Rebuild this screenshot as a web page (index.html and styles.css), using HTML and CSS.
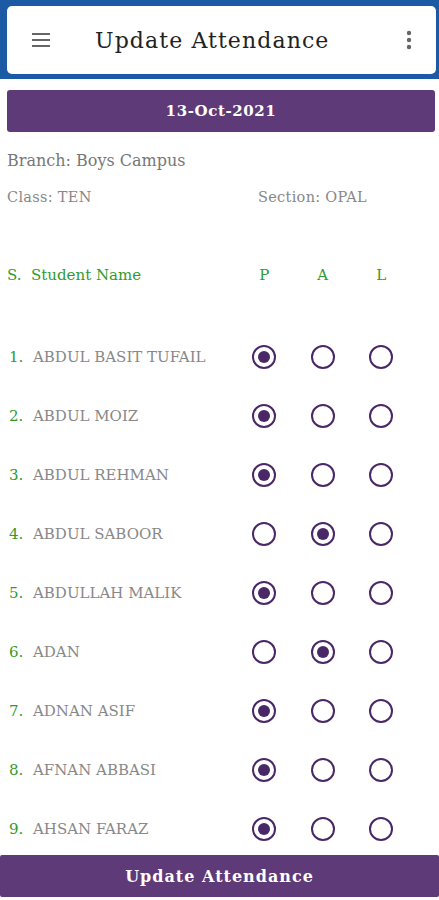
FILE: index.html
```html
<!DOCTYPE html>
<html>
<head>
<meta charset="utf-8">
<link rel="stylesheet" href="styles.css">
</head>
<body>
<div class="topband">
  <div class="toolbar">
    <svg class="menu" width="24" height="24" viewBox="0 0 24 24"><path d="M3 6h18M3 12h18M3 18h18" stroke="#666" stroke-width="2"/></svg>
    <div class="title">Update Attendance</div>
    <svg class="more" width="6" height="20" viewBox="0 0 6 20"><circle cx="3" cy="3" r="2.2" fill="#666"/><circle cx="3" cy="10" r="2.2" fill="#666"/><circle cx="3" cy="17" r="2.2" fill="#666"/></svg>
  </div>
</div>
<div class="datebar">13-Oct-2021</div>
<div class="branch">Branch: Boys Campus</div>
<div class="classrow"><span class="cls">Class: TEN</span><span class="sec">Section: OPAL</span></div>
<div class="header row">
  <div class="name">S.&nbsp; Student Name</div>
  <div class="col">P</div><div class="col">A</div><div class="col">L</div>
</div>
<div class="list">
  <div class="row"><div class="name"><span class="num">1.</span>ABDUL BASIT TUFAIL</div><div class="col"><span class="radio on"></span></div><div class="col"><span class="radio"></span></div><div class="col"><span class="radio"></span></div></div>
  <div class="row"><div class="name"><span class="num">2.</span>ABDUL MOIZ</div><div class="col"><span class="radio on"></span></div><div class="col"><span class="radio"></span></div><div class="col"><span class="radio"></span></div></div>
  <div class="row"><div class="name"><span class="num">3.</span>ABDUL REHMAN</div><div class="col"><span class="radio on"></span></div><div class="col"><span class="radio"></span></div><div class="col"><span class="radio"></span></div></div>
  <div class="row"><div class="name"><span class="num">4.</span>ABDUL SABOOR</div><div class="col"><span class="radio"></span></div><div class="col"><span class="radio on"></span></div><div class="col"><span class="radio"></span></div></div>
  <div class="row"><div class="name"><span class="num">5.</span>ABDULLAH MALIK</div><div class="col"><span class="radio on"></span></div><div class="col"><span class="radio"></span></div><div class="col"><span class="radio"></span></div></div>
  <div class="row"><div class="name"><span class="num">6.</span>ADAN</div><div class="col"><span class="radio"></span></div><div class="col"><span class="radio on"></span></div><div class="col"><span class="radio"></span></div></div>
  <div class="row"><div class="name"><span class="num">7.</span>ADNAN ASIF</div><div class="col"><span class="radio on"></span></div><div class="col"><span class="radio"></span></div><div class="col"><span class="radio"></span></div></div>
  <div class="row"><div class="name"><span class="num">8.</span>AFNAN ABBASI</div><div class="col"><span class="radio on"></span></div><div class="col"><span class="radio"></span></div><div class="col"><span class="radio"></span></div></div>
  <div class="row"><div class="name"><span class="num">9.</span>AHSAN FARAZ</div><div class="col"><span class="radio on"></span></div><div class="col"><span class="radio"></span></div><div class="col"><span class="radio"></span></div></div>
</div>
<div class="bottombtn">Update Attendance</div>
</body>
</html>
```
FILE: styles.css
```css
* { box-sizing: border-box; }
html, body { margin: 0; padding: 0; background: #fff; }
body {
  width: 439px;
  height: 900px;
  overflow: hidden;
  font-family: "DejaVu Serif", serif;
  color: #777;
  position: relative;
}
.topband {
  background: #1c5aa6;
  padding: 6px 3px 5px 7px;
  height: 79px;
}
.toolbar {
  background: #fff;
  border-radius: 5px;
  height: 68px;
  display: flex;
  align-items: center;
  padding: 0 24px 0 22px;
}
.menu { flex: none; }
.title {
  flex: 1;
  margin-left: 42px;
  font-size: 22px;
  color: #222;
  letter-spacing: 1.1px;
}
.more { flex: none; }
.datebar {
  margin: 11px 4px 0 7px;
  height: 42px;
  background: #5e3a78;
  border-radius: 3px;
  color: #fff;
  font-weight: bold;
  font-size: 15px;
  letter-spacing: 0.6px;
  display: flex;
  align-items: center;
  justify-content: center;
}
.branch {
  margin: 19px 0 0 7px;
  font-size: 16px;
  color: #777;
  height: 22px;
}
.classrow {
  margin: 16px 0 0 7px;
  font-size: 14.5px;
  letter-spacing: 0.3px;
  color: #888;
  display: flex;
  height: 20px;
}
.cls { width: 251px; }
.row {
  display: flex;
  align-items: center;
  height: 59px;
  padding-left: 7px;
}
.header {
  margin-top: 56px;
  height: 20px;
  color: #2f9b2f;
  font-size: 15px;
}
.header .col { color: #2f9b2f; }
.list { margin-top: 42px; }
.name {
  width: 228px;
  font-size: 15px;
  color: #888;
  white-space: nowrap;
}
.header .name { color: #2f9b2f; }
.num {
  display: inline-block;
  width: 26px;
  padding-left: 2px;
  color: #2f9b2f;
}
.col {
  width: 58.5px;
  display: flex;
  justify-content: center;
  font-size: 15px;
}
.radio {
  width: 24px;
  height: 24px;
  border: 2px solid #4a2766;
  border-radius: 50%;
  display: flex;
  align-items: center;
  justify-content: center;
}
.radio.on::after {
  content: "";
  width: 12px;
  height: 12px;
  border-radius: 50%;
  background: #4a2766;
}
.bottombtn {
  position: absolute;
  left: 0;
  right: 0;
  top: 855px;
  height: 42px;
  background: #5e3a78;
  color: #fff;
  font-weight: bold;
  font-size: 16px;
  letter-spacing: 1px;
  display: flex;
  align-items: center;
  justify-content: center;
  border-radius: 2px;
}
```
